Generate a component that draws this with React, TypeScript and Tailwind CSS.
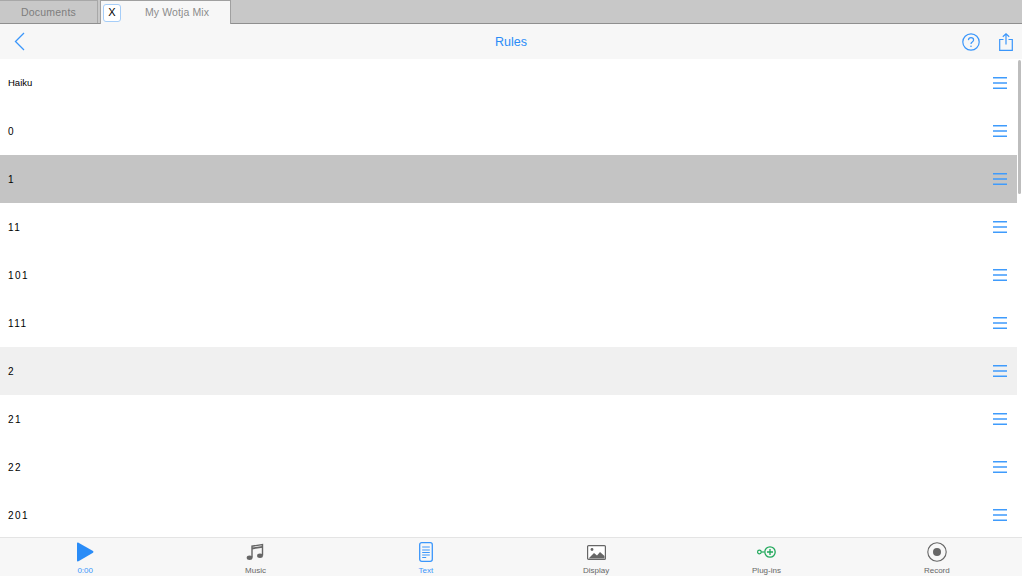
const RULES = ["Haiku", "0", "1", "11", "101", "111", "2", "21", "22", "201"];

const BLUE = "#3a96fb";

function MenuLines() {
  return (
    <svg width="14" height="12" viewBox="0 0 14 12" className="shrink-0">
      <path d="M0 .7h14M0 6h14M0 11.3h14" stroke="#3f9bfc" strokeWidth="1.4" fill="none" />
    </svg>
  );
}

function Row({ label }: { label: string }) {
  let bg = "bg-white";
  if (label === "1") bg = "bg-[#c4c4c4]";
  if (label === "2") bg = "bg-[#f0f0f0]";
  const spaced = label !== "Haiku";
  return (
    <div className={`${bg} h-12 shrink-0 flex items-center justify-between pl-2 pr-[10px]`}>
      <span className={`pt-px text-black ${spaced ? "text-[10px] tracking-[1.4px]" : "text-[9.5px] pt-[2px]"}`}>{label}</span>
      <MenuLines />
    </div>
  );
}

function TabItem({ label, color, icon }: { label: string; color: string; icon: React.ReactNode }) {
  return (
    <div className="flex flex-col items-center">
      <div className="h-[24px] flex items-center justify-center">{icon}</div>
      <span className={`text-[8px] leading-[10px] mt-[2px] ${color}`}>{label}</span>
    </div>
  );
}

export default function App() {
  return (
    <div className="w-[1022px] h-[576px] flex flex-col overflow-hidden bg-white font-['Liberation_Sans',Arial,sans-serif]">
      {/* Tabs */}
      <div className="h-6 shrink-0 flex bg-[#c8c8c8] border-b border-[#8f8f8f]">
        <div className="w-[98px] pt-px border-t border-r border-[#a8a8a8] flex items-center justify-center text-[10.5px] tracking-[0.2px] text-[#7d7d7d]">
          Documents
        </div>
        <div className="w-[131px] ml-[2px] -mb-px border-x border-t border-[#a0a0a0] bg-[#f7f7f7] flex items-center pl-[2px]">
          <div className="w-[18px] h-[18px] rounded-[3px] border border-[#a5cdf8] bg-white flex items-center justify-center text-[11px] text-black">
            X
          </div>
          <span className="ml-[24px] text-[10.5px] tracking-[0.1px] text-[#8c8c8c]">My Wotja Mix</span>
        </div>
      </div>

      {/* Header */}
      <div className="h-[35px] shrink-0 bg-[#f7f7f7] grid grid-cols-3 items-center px-[9px]">
        <svg width="11" height="19" viewBox="0 0 11 19" className="ml-[5px]">
          <path d="M10 1L1.5 9.5 10 18" stroke={BLUE} strokeWidth="1.3" fill="none" />
        </svg>
        <span className="pt-[2px] text-[12.5px] text-center text-[#2a8cf7]">Rules</span>
        <div className="flex items-center justify-end gap-[19px]">
          <svg width="18" height="18" viewBox="0 0 18 18">
            <circle cx="9" cy="9" r="8.2" stroke={BLUE} strokeWidth="1.2" fill="none" />
            <path d="M6.4 7.1C6.5 5.5 7.6 4.7 9 4.7c1.5 0 2.6.9 2.6 2.2 0 1.1-.7 1.6-1.4 2.1-.8.5-1.2 1-1.2 1.9" stroke={BLUE} strokeWidth="1.2" fill="none" />
            <circle cx="9" cy="13.2" r="0.8" fill={BLUE} />
          </svg>
          <svg width="14" height="18" viewBox="0 0 14 18">
            <path d="M4.5 6.5H.7v10.8h12.6V6.5H9.5" stroke={BLUE} strokeWidth="1.2" fill="none" />
            <path d="M7 11.5V.8M3.8 3.8L7 .8l3.2 3" stroke={BLUE} strokeWidth="1.2" fill="none" />
          </svg>
        </div>
      </div>

      {/* Rules list */}
      <div className="relative flex-1 min-h-0 overflow-hidden pr-[5px]">
        <div className="flex flex-col">
          {RULES.map((r) => (
            <Row key={r} label={r} />
          ))}
        </div>
        <div className="absolute right-[1px] top-[1px] w-[3px] h-[134px] rounded-full bg-[#bdbdbd]" />
      </div>

      {/* Bottom bar */}
      <div className="h-[39px] shrink-0 bg-[#f7f7f7] border-t border-[#e4e4e4] grid grid-cols-6 overflow-hidden pt-[2px]">
        <TabItem
          label="0:00"
          color="text-[#3a96fb]"
          icon={
            <svg width="18" height="20" viewBox="0 0 18 20">
              <path d="M1 1.5C1 .7 1.8.3 2.5.7l14.5 8.4c.6.4.6 1.3 0 1.7L2.5 19.3C1.8 19.7 1 19.3 1 18.5z" fill="#2a8cf7" />
            </svg>
          }
        />
        <TabItem
          label="Music"
          color="text-[#666666]"
          icon={
            <svg width="18" height="18" viewBox="0 0 18 18">
              <path d="M6 14.5V3.2l10.5-1.7v11" stroke="#666" strokeWidth="1.4" fill="none" />
              <path d="M6 5.5l10.5-1.7" stroke="#666" strokeWidth="1.8" fill="none" />
              <ellipse cx="3.6" cy="14.8" rx="2.9" ry="2.2" fill="#666" />
              <ellipse cx="14" cy="12.8" rx="2.9" ry="2.2" fill="#666" />
            </svg>
          }
        />
        <TabItem
          label="Text"
          color="text-[#3a96fb]"
          icon={
            <svg width="14" height="20" viewBox="0 0 14 20">
              <rect x="0.7" y="0.7" width="12.6" height="18.6" rx="2" stroke={BLUE} strokeWidth="1.3" fill="none" />
              <path d="M3.2 5h7.6M3.2 8h7.6M3.2 10.5h7.6M3.2 13h7.6M3.2 15.5h4" stroke={BLUE} strokeWidth="1" fill="none" />
            </svg>
          }
        />
        <TabItem
          label="Display"
          color="text-[#666666]"
          icon={
            <svg width="19" height="15" viewBox="0 0 19 15">
              <rect x="0.6" y="0.6" width="17.8" height="13.8" rx="1" stroke="#666" strokeWidth="1.2" fill="#fff" />
              <circle cx="5" cy="4.5" r="1.4" fill="#666" />
              <path d="M1.5 13.5L7 8l3 2.5 3-3.5 4.5 4v2.5z" fill="#666" />
            </svg>
          }
        />
        <TabItem
          label="Plug-ins"
          color="text-[#666666]"
          icon={
            <svg width="19" height="12" viewBox="0 0 19 12">
              <circle cx="2.4" cy="6" r="1.8" stroke="#1fa85a" strokeWidth="1.2" fill="none" />
              <path d="M4.2 6h3" stroke="#1fa85a" strokeWidth="1.2" />
              <circle cx="13" cy="6" r="5.2" stroke="#1fa85a" strokeWidth="1.3" fill="none" />
              <path d="M13 3v6M10 6h6" stroke="#1fa85a" strokeWidth="1.3" />
            </svg>
          }
        />
        <TabItem
          label="Record"
          color="text-[#666666]"
          icon={
            <svg width="20" height="20" viewBox="0 0 20 20">
              <circle cx="10" cy="10" r="9.2" stroke="#666" strokeWidth="1.1" fill="none" />
              <circle cx="10" cy="10" r="4" fill="#666" />
            </svg>
          }
        />
      </div>
    </div>
  );
}
